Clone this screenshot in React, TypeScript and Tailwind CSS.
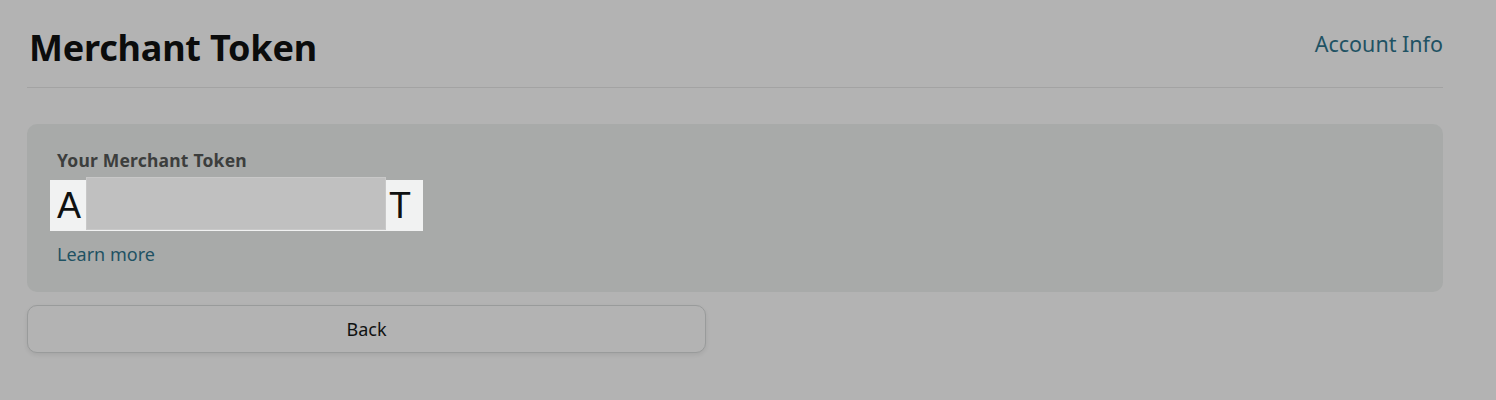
export default function App() {
  return (
    <div className="min-h-[400px] w-full bg-[#b3b3b3] pl-[27px] pr-[53px] pt-[26px]" style={{ fontFamily: '"Noto Sans", "Open Sans", sans-serif' }}>
      <div>
        <div className="flex items-start justify-between border-b border-[#a3a3a3] pb-[17px]">
          <h1 className="ml-[2px] text-[36px] font-bold leading-[44px] tracking-[-0.2px] text-[#0b0c0c]">Merchant Token</h1>
          <a className="mt-[5px] text-[21.5px] leading-[26px] text-[#1f5263]">Account Info</a>
        </div>
        <div className="mt-[36px] h-[168px] rounded-[10px] bg-[#a8aaa9] px-[30px] pt-[24px]">
          <div className="text-[17.5px] font-bold leading-[24px] tracking-[0.2px] text-[#3c3e3d]">Your Merchant Token</div>
          <div className="relative -ml-[7px] mt-[8px] flex h-[51px] w-[373px] items-center justify-between bg-[#f1f2f2] pl-[7px] pr-[12px] text-[36px] leading-[51px] text-[#0f1111]" style={{ fontFamily: '"Liberation Sans", Arial, sans-serif' }}>
            <span>A</span>
            <span>T</span>
            <div className="absolute left-[36px] top-[-3px] h-[53px] w-[300px] border border-[#c8c8c8] bg-[#c0c0c0]" />
          </div>
          <a className="mt-[11px] block text-[18px] leading-[24px] text-[#1f5263]">Learn more</a>
        </div>
        <button className="mt-[13px] h-[48px] w-[679px] rounded-[10px] border border-[#999b9b] bg-[#b3b3b3] text-[18px] text-[#0f1111] shadow-[0_2px_4px_rgba(0,0,0,0.08)]">Back</button>
      </div>
    </div>
  );
}
